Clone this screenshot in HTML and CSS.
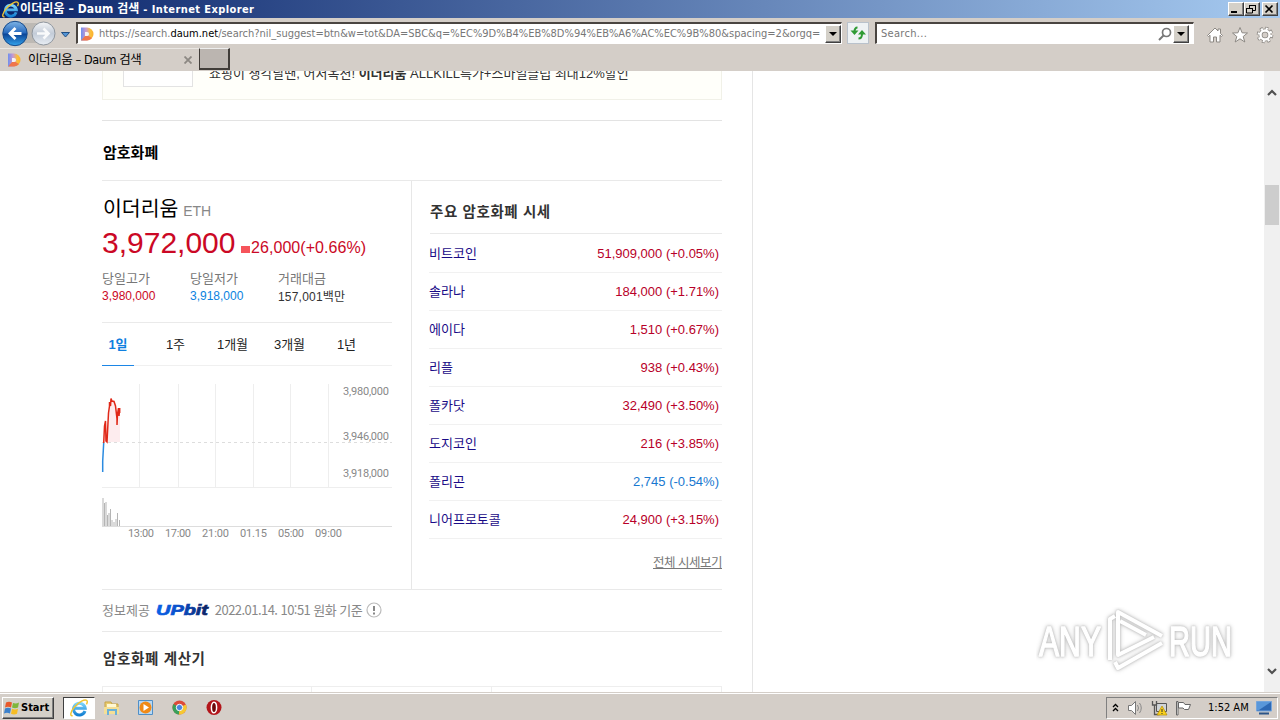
FILE: index.html
```html
<!DOCTYPE html>
<html lang="ko">
<head>
  <meta charset="utf-8">
  <title>이더리움 – Daum 검색</title>
  <link rel="stylesheet" href="styles.css">
</head>
<body>
<svg class="defs" width="0" height="0">
  <defs>
    <linearGradient id="blueBall" x1="0" y1="0" x2="0" y2="1"><stop offset="0" stop-color="#7fb4e6"/><stop offset=".48" stop-color="#2668bd"/><stop offset=".52" stop-color="#0b4396"/><stop offset="1" stop-color="#35a5ed"/></linearGradient>
    <linearGradient id="greyBall" x1="0" y1="0" x2="0" y2="1"><stop offset="0" stop-color="#f4f5f7"/><stop offset=".5" stop-color="#c3ccd8"/><stop offset="1" stop-color="#e9eef4"/></linearGradient>
    <linearGradient id="ieBlue" x1="0" y1="0" x2="0" y2="1"><stop offset="0" stop-color="#7ad3fa"/><stop offset="1" stop-color="#1580d2"/></linearGradient>
    <linearGradient id="daumD" x1="0" y1="0" x2="1" y2="0"><stop offset="0" stop-color="#6f8fee"/><stop offset=".4" stop-color="#c99ad0"/><stop offset=".75" stop-color="#fbbf3a"/><stop offset="1" stop-color="#fbb02f"/></linearGradient>
    <linearGradient id="upbitBlue"><stop offset="0" stop-color="#0a62e8"/><stop offset=".45" stop-color="#0a4fc8"/><stop offset="1" stop-color="#0b1f5c"/></linearGradient>
    <symbol id="ie" viewBox="0 0 16 16">
      <path d="M13.3 10.7A5.2 5.2 0 1 1 13.5 8.3H4" fill="none" stroke="url(#ieBlue)" stroke-width="2.7"/>
      <path d="M2.4 14.8C-.4 15.6.4 11.2 4 7.2 8 2.6 13.2-.3 14.9 1.3c.8.8.4 2.2-.3 3.5" fill="none" stroke="#f2c531" stroke-width="1.3"/>
    </symbol>
    <symbol id="daum" viewBox="0 0 14 14">
      <path d="M1 .5H7a6.5 6.5 0 0 1 0 13H1z" fill="url(#daumD)"/>
      <path d="M1 13.5L5 9H8.5L12 11A6.5 6.5 0 0 1 7 13.5z" fill="#f0764a"/>
      <path d="M5 5H7a2 2 0 0 1 0 4H5z" fill="#f7f2f4"/>
    </symbol>
  </defs>
</svg>

<header class="titlebar">
  <svg class="title-icon" width="17" height="17"><use href="#ie"/></svg>
  <h1><span class="title-ko">이더리움 – Daum 검색</span><span class="title-en"> - Internet Explorer</span></h1>
  <div class="window-buttons">
    <button><svg width="12" height="10"><path d="M2 8h6" stroke="#000" stroke-width="2"/></svg></button>
    <button><svg width="12" height="10"><path d="M4.5 4V1.5H10.5V6.5H8M1.5 4.5H7.5V9H1.5zM4 1.5H11M1 4.5H8" fill="none" stroke="#000"/></svg></button>
    <button class="close"><svg width="12" height="10"><path d="M2.5 1.5l7 7M9.5 1.5l-7 7" stroke="#000" stroke-width="1.7"/></svg></button>
  </div>
</header>

<nav class="navbar">
  <svg class="back-forward" width="74" height="28" viewBox="0 0 74 28">
    <rect x="4" y="3" width="50" height="20" rx="10" fill="#bdb9b4"/>
    <circle cx="15" cy="13.5" r="12.2" fill="url(#blueBall)" stroke="#174a8a"/>
    <path d="M21.5 13.5H11M15.5 8L10 13.5l5.5 5.5" fill="none" stroke="#fff" stroke-width="2.8"/>
    <circle cx="43.5" cy="13.5" r="11.5" fill="url(#greyBall)" stroke="#8f969e"/>
    <path d="M37 13.5H48M43.5 8.5l5 5-5 5" fill="none" stroke="#f9fafb" stroke-width="2.6"/>
    <path d="M61.5 12.5h8l-4 4.5z" fill="#5294d6" stroke="#214f83"/>
  </svg>
  <div class="address">
    <svg width="14" height="14"><use href="#daum"/></svg>
    <span class="url">https://search.<b>daum.net</b>/search?nil_suggest=btn&amp;w=tot&amp;DA=SBC&amp;q=%EC%9D%B4%EB%8D%94%EB%A6%AC%EC%9B%80&amp;spacing=2&amp;orgq=</span>
    <button class="drop"></button>
  </div>
  <button class="refresh"><svg width="18" height="18"><path d="M8.5 3.5q-3 0-3 4.5M9.5 14.5q3.5 0 3.5-4.5" fill="none" stroke="#2f9b35" stroke-width="2"/><path d="M1.5 6.5h8l-4 4.5zM9 10.5h8L13 6z" fill="#2f9b35"/></svg></button>
  <div class="search">
    <span>Search...</span>
    <svg width="14" height="14"><circle cx="8.5" cy="5.5" r="4" fill="none" stroke="#777" stroke-width="1.7"/><path d="M5.5 8.5L1 13" stroke="#777" stroke-width="2"/></svg>
    <button class="drop"></button>
  </div>
  <div class="tools">
    <svg width="18" height="18"><path d="M1.5 9.5L9 2l3 3V3h2.5v4.5l2 2-1 1-1.5-1.3V16h-3.5v-5H7.5v5H4V9.2L2.5 10.5z" fill="#fff" stroke="#8c8883"/></svg>
    <svg width="18" height="18"><path d="M9 1.5l2.1 5.3 5.4.2-4.3 3.5 1.6 5.5L9 12.8 4.2 16l1.6-5.5L1.5 7l5.4-.2z" fill="#fff" stroke="#8c8883"/></svg>
    <svg width="18" height="18"><circle cx="9" cy="9" r="6.6" fill="none" stroke="#8c8883" stroke-width="3.4" stroke-dasharray="2.9 2.284"/><circle cx="9" cy="9" r="4.5" fill="none" stroke="#8c8883" stroke-width="4"/><circle cx="9" cy="9" r="6.3" fill="none" stroke="#fff" stroke-width="2.4" stroke-dasharray="2 2.948"/><circle cx="9" cy="9" r="4.5" fill="none" stroke="#fff" stroke-width="2.4"/></svg>
  </div>
</nav>

<div class="tabs">
  <div class="tab">
    <svg width="14" height="14"><use href="#daum"/></svg>
    <span>이더리움 – Daum 검색</span>
    <svg class="tab-close" width="8" height="8"><path d="M.5.5l7 7M7.5.5l-7 7" stroke="#8c8883" stroke-width="1.8"/></svg>
  </div>
  <div class="new-tab"></div>
</div>

<div class="viewport">
  <main class="page">
    <div class="ad">
      <div class="thumb"></div>
      <p>쇼핑이 생각날땐, 어서옥션! <b>이더리움</b> ALLKILL특가+스마일클럽 최대12%할인</p>
    </div>

    <h2 class="section-title">암호화폐</h2>

    <section class="crypto">
      <div class="coin">
        <h3>이더리움 <small>ETH</small></h3>
        <div class="price"><strong>3,972,000</strong><i></i><span>26,000(+0.66%)</span></div>
        <dl class="stats">
          <div><dt>당일고가</dt><dd class="up">3,980,000</dd></div>
          <div><dt>당일저가</dt><dd class="down">3,918,000</dd></div>
          <div><dt>거래대금</dt><dd class="volume">157,001백만</dd></div>
        </dl>
        <ul class="periods">
          <li class="on">1일</li>
          <li>1주</li>
          <li>1개월</li>
          <li>3개월</li>
          <li>1년</li>
        </ul>
        <svg class="chart" width="290" height="170" viewBox="0 0 290 170">
          <path d="M37.5 18v103M76.5 18v103M113.5 18v103M151.5 18v103M188.5 18v103M226.5 18v103M0 121.5h290" stroke="#eee"/>
          <path d="M0 76.5h290" stroke="#ddd" stroke-dasharray="3 3"/>
          <path d="M2 76L4 57 5 76 7 46 9 33l4 4 2 10 3-4V76z" fill="#fdecee"/>
          <path d="M.7 106V95L1.7 77" fill="none" stroke="#2b8be0" stroke-width="1.5"/>
          <path d="M1.7 77L2.5 60 3.5 55 4 75 5 76 6.5 47 7.5 40V36L8.5 40 9 32.5 10 35 12 35.5 13.5 40 15 53V59L15.5 48 16.5 42 17 50 17.7 42V47" fill="none" stroke="#e02818" stroke-width="1.5"/>
          <path d="M0 160.5h290" stroke="#ddd"/>
          <path d="M1 132v28M2.5 137v23M4 136v24M5.5 149v11M7 147v13M8.5 143v17M10 154v6M12 156v4M14 153v7M15.5 147v13M17.5 154v6" stroke="#b5b5b5"/>
          <g class="values">
            <text x="241" y="29" textLength="46">3,980,000</text>
            <text x="241" y="74" textLength="46">3,946,000</text>
            <text x="241" y="111" textLength="46">3,918,000</text>
          </g>
          <g class="times">
            <text x="26" y="171" textLength="26">13:00</text>
            <text x="63" y="171" textLength="26">17:00</text>
            <text x="100" y="171" textLength="27">21:00</text>
            <text x="138" y="171" textLength="27">01.15</text>
            <text x="176" y="171" textLength="26">05:00</text>
            <text x="213" y="171" textLength="27">09:00</text>
          </g>
        </svg>
      </div>

      <div class="market">
        <h4>주요 암호화폐 시세</h4>
        <ul>
          <li><a>비트코인</a><span>51,909,000 (+0.05%)</span></li>
          <li><a>솔라나</a><span>184,000 (+1.71%)</span></li>
          <li><a>에이다</a><span>1,510 (+0.67%)</span></li>
          <li><a>리플</a><span>938 (+0.43%)</span></li>
          <li><a>폴카닷</a><span>32,490 (+3.50%)</span></li>
          <li><a>도지코인</a><span>216 (+3.85%)</span></li>
          <li><a>폴리곤</a><span class="down">2,745 (-0.54%)</span></li>
          <li><a>니어프로토콜</a><span>24,900 (+3.15%)</span></li>
        </ul>
        <a class="more">전체 시세보기</a>
      </div>
    </section>

    <div class="source">
      <span>정보제공</span>
      <svg class="upbit" width="54" height="16"><text x="0" y="13" textLength="52" lengthAdjust="spacingAndGlyphs" fill="url(#upbitBlue)" stroke="url(#upbitBlue)">UPbit</text></svg>
      <span class="date">2022.01.14. 10:51 원화 기준</span>
      <svg width="16" height="16"><circle cx="8" cy="8" r="7" fill="none" stroke="#bbb" stroke-width="1.2"/><path d="M8 4v5M8 10.5v2" stroke="#888" stroke-width="2"/></svg>
    </div>

    <h3 class="calc-title">암호화폐 계산기</h3>
    <div class="calc"><div></div><div></div><div></div></div>
  </main>

  <div class="scrollbar">
    <svg width="10" height="7"><path d="M1 6l4-4 4 4" fill="none" stroke="#505050" stroke-width="2.2"/></svg>
    <div class="scroll-thumb"></div>
    <svg width="10" height="7"><path d="M1 1l4 4 4-4" fill="none" stroke="#505050" stroke-width="2.2"/></svg>
  </div>

  <svg class="watermark" width="200" height="68" viewBox="0 0 200 68">
    <g class="mark">
      <text x="3" y="49" textLength="62" lengthAdjust="spacingAndGlyphs">ANY</text>
      <text x="133" y="49" textLength="63" lengthAdjust="spacingAndGlyphs">RUN</text>
      <path d="M74 53V12L79 9M82 48V5L126 29M84 14L110 28M82 21V48L118 30M79 55L82 61 126 36" fill="none"/>
    </g>
  </svg>
</div>

<footer class="taskbar">
  <button class="start">
    <svg width="16" height="16"><path d="M2 2.5q3-1.5 6 0L7 7.5q-3-1.5-6 0z" fill="#e8592b"/><path d="M9 3q3 1 6-.5l-1 5q-3 1.5-6 0z" fill="#7fb63a"/><path d="M1 8.5q3-1.5 6 0l-1 5q-3-1.5-6 0z" fill="#3c81cc"/><path d="M8 8.8q3 1.5 6 0l-1 5q-3 1.5-6 0z" fill="#f6bd25"/></svg>
    Start
  </button>
  <div class="apps">
    <div class="app active"><svg width="18" height="18"><use href="#ie"/></svg></div>
    <div class="app"><svg width="18" height="18"><path d="M2 3h6l1 2h6v9H2z" fill="#e8cb72" stroke="#c6a347"/><path d="M4 5h9v4H4z" fill="#fff8d4"/><path d="M1 8h15v7H1z" fill="#f4df96"/><path d="M5 16v-5h8v5" fill="none" stroke="#6bb1d8" stroke-width="2"/></svg></div>
    <div class="app"><svg width="18" height="18"><path d="M1.5 1.5h14v14h-14z" fill="#b8d8f2" stroke="#4f8fc8"/><circle cx="8.5" cy="8.5" r="6" fill="#f08a17"/><path d="M6.5 5l5.5 3.5-5.5 3.5z" fill="#fff"/></svg></div>
    <div class="app"><svg width="18" height="18"><circle cx="8.5" cy="8.5" r="7" fill="#dd4b3a"/><path d="M8.5 8.5L2.4 5A7 7 0 0 0 8 15.5z" fill="#3aa05a"/><path d="M8.5 8.5l6.4-3A7 7 0 0 1 8 15.5z" fill="#f6c832"/><circle cx="8.5" cy="8.5" r="3.2" fill="#4a86e0" stroke="#fff"/></svg></div>
    <div class="app"><svg width="18" height="18"><circle cx="9" cy="8.5" r="7.5" fill="#b3151a"/><ellipse cx="9" cy="8.5" rx="2.6" ry="5.3" fill="#6d0808" stroke="#fff" stroke-width="1.5"/></svg></div>
  </div>
  <div class="tray">
    <svg width="8" height="10"><path d="M1 4l2.5-2.5L6 4M1 8l2.5-2.5L6 8" fill="none" stroke="#000" stroke-width="1.3"/></svg>
    <svg width="17" height="16"><path d="M1.5 5.5h3l4-4v13l-4-4h-3z" fill="#fff" stroke="#777"/><path d="M10.5 5q2 3 0 6M12.5 3q3.5 5 0 10" fill="none" stroke="#888"/></svg>
    <svg width="17" height="16"><path d="M5.5 3.5h10v8h-10z" fill="#d0d4d8" stroke="#555"/><path d="M1.5 1v4h4V1M3.5 5v9.5h5" fill="none" stroke="#555" stroke-width="1.3"/><path d="M11 6l5 9H6z" fill="#f8d01c" stroke="#b68d00" stroke-width=".7"/><path d="M11 9v3M11 13v1" stroke="#333"/></svg>
    <svg width="17" height="16"><path d="M1.5 1.5h1.5v13.5H1.5zM3.5 2.5h5l1.5 2h5.5l-2 5h-4l-1.5-1.5H3.5z" fill="#fff" stroke="#666"/></svg>
    <time>1:52 AM</time>
    <svg class="desktop" width="16" height="14"><path d="M.5.5h15v9.5h-15z" fill="#2d68b4" stroke="#74a5dc"/><path d="M1 1h14L3 9H1z" fill="#5997da"/><path d="M3 12.5h10" stroke="#2b5588" stroke-width="2"/></svg>
  </div>
</footer>
</body>
</html>
```

FILE: styles.css
```css
* {
  box-sizing: border-box;
}

body {
  margin: 0;
  width: 1280px;
  height: 720px;
  overflow: hidden;
  display: flex;
  flex-direction: column;
  font-family: "Liberation Sans", "Noto Sans CJK KR", sans-serif;
  font-size: 12px;
  background: #fff;
}

h1, h2, h3, h4, p, ul, dl, dd {
  margin: 0;
  padding: 0;
}

ul {
  list-style: none;
}

svg {
  display: block;
  flex: none;
}

.defs {
  position: absolute;
}

button {
  padding: 0;
  border: 1px solid;
  border-color: #fff #404040 #404040 #fff;
  box-shadow: inset -1px -1px #808080;
  background: #d4d0c8;
}

/* browser window */
.titlebar {
  display: flex;
  align-items: center;
  height: 18px;
  padding: 0 2px;
  background: linear-gradient(90deg, #0a246a, #a6caf0);
}

.titlebar h1 {
  flex: 1;
  margin-left: 1px;
  color: #fff;
  font: bold 11px/18px "DejaVu Sans Condensed", "Noto Sans CJK KR", sans-serif;
  white-space: pre;
}

.title-ko {
  font-size: 12px;
  letter-spacing: 0.1px;
}

.title-en {
  letter-spacing: 0.4px;
}

.window-buttons {
  display: flex;
}

.window-buttons button {
  width: 16px;
  height: 14px;
}

.window-buttons .close {
  margin-left: 2px;
}

.navbar {
  display: flex;
  align-items: center;
  height: 30px;
  background: #d4cec8;
}

.back-forward {
  margin-top: 2px;
}

.address, .search {
  display: flex;
  align-items: center;
  height: 22px;
  border: 1px solid #fff;
  border-top: 2px solid #4a4541;
  border-left: 2px solid #4a4541;
  background: #fff;
  color: #777;
  font: 11px "DejaVu Sans Condensed", sans-serif;
}

.address {
  width: 766px;
  margin-left: 2px;
  padding-left: 2px;
}

.url {
  flex: 1;
  margin-left: 5px;
  white-space: nowrap;
}

.url b {
  color: #000;
  font-weight: normal;
}

.drop {
  width: 16px;
  height: 18px;
}

.drop::before {
  content: "";
  display: block;
  width: 0;
  margin: auto;
  border: 4px solid transparent;
  border-top-color: #000;
  border-bottom: 0;
}

.refresh {
  display: flex;
  width: 22px;
  height: 22px;
  margin-left: 5px;
  padding: 1px;
  border-color: #b9c2cc;
  box-shadow: none;
  background: #eef2f4;
}

.search {
  width: 319px;
  margin-left: 6px;
  padding: 0 4px;
}

.search span {
  flex: 1;
  letter-spacing: 0.3px;
}

.search .drop {
  margin-left: 1px;
}

.tools {
  display: flex;
  gap: 7px;
  margin: 4px 0 0 12px;
}

.tabs {
  display: flex;
  height: 23px;
  background: #d4cec8;
}

.tab {
  display: flex;
  align-items: center;
  width: 199px;
  padding: 0 7px;
  border-top: 1px solid #eae7e3;
}

.tab span {
  flex: 1;
  margin-left: 7px;
  font: 12.5px/20px "DejaVu Sans Condensed", "Noto Sans CJK KR", sans-serif;
  letter-spacing: -0.4px;
}

.new-tab {
  width: 31px;
  height: 22px;
  border: 1px solid #eee;
  border-right: 2px solid #403c38;
  border-bottom: 2px solid #403c38;
  border-left-color: #403c38;
  background: #bbb5b0;
}

/* page content */
.viewport {
  position: relative;
  display: flex;
  justify-content: space-between;
  height: 621px;
  overflow: hidden;
}

.page {
  width: 753px;
  padding: 0 30px 0 102px;
  border-right: 1px solid #e5e5e5;
}

.ad {
  display: flex;
  height: 29px;
  border: 1px solid #f1f1e8;
  border-top: 0;
  background: #fffffa;
}

.thumb {
  width: 70px;
  height: 16px;
  margin-left: 20px;
  border: 1px solid #e3e3e3;
  border-top: 0;
  background: #fff;
}

.ad p {
  margin: -7px 0 0 16px;
  font-size: 13px;
  line-height: 20px;
  color: #333;
  white-space: nowrap;
}

.section-title {
  height: 61px;
  margin-top: 20px;
  padding-left: 1px;
  border-top: 1px solid #e3e3e3;
  border-bottom: 1px solid #e9e9e9;
  font-size: 15px;
  line-height: 64px;
}

.crypto {
  display: flex;
  height: 409px;
  border-bottom: 1px solid #e9e9e9;
}

.coin {
  width: 310px;
  padding: 15px 19px 0 0;
  border-right: 1px solid #e7e7e7;
}

.coin h3 {
  height: 27px;
  padding-left: 1px;
  font-size: 20.5px;
  font-weight: 400;
  line-height: 26px;
}

.coin small {
  margin-left: -1px;
  color: #888;
  font-size: 14px;
}

.price {
  display: flex;
  align-items: baseline;
  height: 47px;
  color: #cb0825;
}

.price strong {
  width: 134px;
  font-size: 30px;
  font-weight: 400;
  line-height: 40px;
}

.price i {
  width: 9px;
  height: 7px;
  margin: 0 1px 0 5px;
  background: #f6545b;
}

.price span {
  font-size: 16px;
  letter-spacing: 0.06px;
}

.stats {
  display: flex;
  height: 52px;
}

.stats div {
  width: 88px;
}

.stats dt {
  color: #777;
  font-size: 13px;
  line-height: 18px;
}

.stats dd {
  color: #333;
  font-size: 12px;
  line-height: 17px;
  white-space: nowrap;
}

.stats .volume {
  letter-spacing: 0.2px;
  line-height: 19px;
}

.stats .up {
  color: #cb0825;
}

.stats .down {
  color: #0a82e0;
}

.periods {
  display: flex;
  height: 44px;
  border-top: 1px solid #eaeaea;
  border-bottom: 1px solid #f0f0f0;
}

.periods li {
  width: 57px;
  font-size: 13px;
  line-height: 44px;
  color: #222;
  text-align: center;
}

.periods li.on {
  width: 32px;
  height: 43px;
  margin-right: 13px;
  border-bottom: 1px solid #1c86e6;
  color: #1080e0;
  font-weight: bold;
}

.chart {
  overflow: visible;
}

.chart text {
  font: 11px Roboto, sans-serif;
  fill: #888;
}

.market {
  width: 310px;
  padding-left: 18px;
}

.market h4 {
  height: 53px;
  border-bottom: 1px solid #e9e9e9;
  font-size: 14.5px;
  letter-spacing: 0.6px;
  line-height: 62px;
  color: #333;
}

.market ul {
  padding-top: 1px;
}

.market li {
  display: flex;
  justify-content: space-between;
  height: 38px;
  padding-right: 3px;
  margin-left: -1px;
  border-bottom: 1px solid #f1f1f1;
  font-size: 13px;
  line-height: 37px;
}

.market li a {
  color: #1a0b87;
}

.market li span {
  color: #b80028;
}

.market li .down {
  color: #1878d0;
}

.more {
  display: block;
  margin-top: 14px;
  color: #777;
  font-size: 12.5px;
  letter-spacing: -0.5px;
  line-height: 20px;
  text-align: right;
  text-decoration: underline;
}

.source {
  display: flex;
  align-items: center;
  height: 42px;
  padding-bottom: 2px;
  border-bottom: 1px solid #e9e9e9;
  color: #888;
  font: 13px "Noto Sans CJK KR", sans-serif;
}

.upbit {
  margin: 0 5px 0 6px;
}

.upbit text {
  font: italic bold 15px "Liberation Sans", sans-serif;
  stroke-width: .7px;
}

.date {
  width: 148px;
  margin-right: 3px;
  letter-spacing: -0.55px;
  white-space: nowrap;
}

.calc-title {
  height: 54px;
  padding-left: 1px;
  color: #333;
  font-size: 14.5px;
  letter-spacing: 0.65px;
  line-height: 54px;
}

.calc {
  display: grid;
  grid-template-columns: 209px 180px 229px;
  height: 20px;
  border: 1px solid #eee;
}

.calc div {
  border-right: 1px solid #eee;
}

.calc div:last-child {
  border: 0;
}

.scrollbar {
  display: flex;
  flex-direction: column;
  align-items: center;
  width: 16px;
  padding: 18px 0 17px;
  background: #f0f0f0;
}

.scroll-thumb {
  width: 14px;
  height: 40px;
  margin: 89px 0 auto;
  background: #cdcdcd;
}

.watermark {
  position: absolute;
  left: 1036px;
  top: 536px;
}

.mark {
  font: 43px "Liberation Sans", sans-serif;
  fill: #fff;
  stroke: #fff;
  stroke-width: 4px;
  stroke-linejoin: round;
  filter: drop-shadow(0 0 1px #bbb) drop-shadow(0 0 2px #ccc);
}

.mark text {
  stroke-width: 1.5px;
}

/* windows taskbar */
.taskbar {
  display: flex;
  align-items: center;
  height: 28px;
  padding: 2px 2px 0;
  border-top: 1px solid #d4cec8;
  box-shadow: inset 0 1px #fff;
  background: #d4cec8;
}

.start {
  display: flex;
  align-items: center;
  gap: 1px;
  width: 52px;
  height: 22px;
  padding-left: 1px;
  font: bold 11px "DejaVu Sans Condensed", sans-serif;
}

.apps {
  display: flex;
  flex: 1;
  margin-left: 9px;
}

.app {
  display: flex;
  align-items: center;
  justify-content: center;
  width: 34px;
  height: 22px;
}

.app.active {
  width: 32px;
  border: 1px solid;
  border-color: #404040 #fff #fff #404040;
  background: #fff;
}

.tray {
  display: flex;
  align-items: center;
  gap: 7px;
  width: 172px;
  height: 22px;
  padding-left: 5px;
  border: 1px solid;
  border-color: #808080 #fff #fff #808080;
  font: 11px "DejaVu Sans Condensed", sans-serif;
}

.tray time {
  margin-left: 9px;
  white-space: nowrap;
}
```
